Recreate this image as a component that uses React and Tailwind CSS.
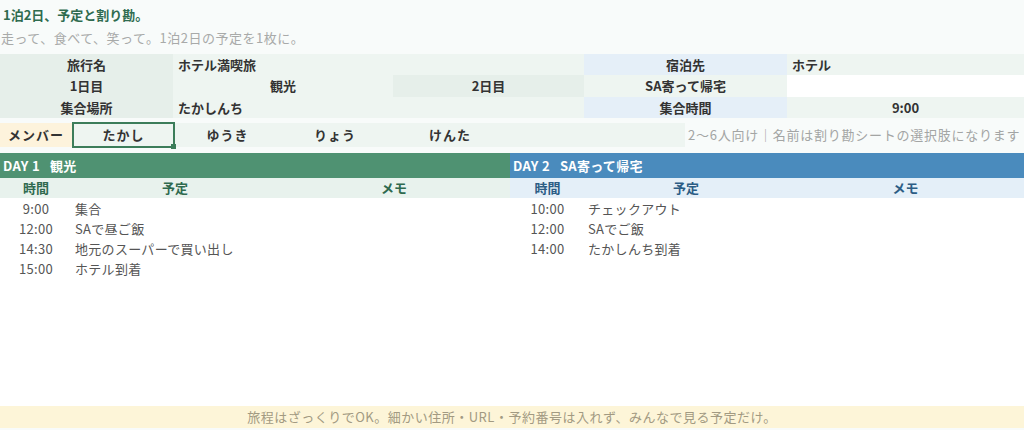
import React from 'react';

const font = { fontFamily: '"Noto Sans CJK JP", "Noto Sans", sans-serif' };

const day1 = [
    ['9:00', '集合'],
    ['12:00', 'SAで昼ご飯'],
    ['14:30', '地元のスーパーで買い出し'],
    ['15:00', 'ホテル到着'],
];

const day2 = [
    ['10:00', 'チェックアウト'],
    ['12:00', 'SAでご飯'],
    ['14:00', 'たかしんち到着'],
];

function Cell({ className = '', children }) {
    return <div className={`flex items-center px-[5px] ${className}`}>{children}</div>;
}

function DaySchedule({ day, title, rows, head, headBg, headText, widths }) {
    return (
        <div className="flex flex-col">
            <div className={`h-[25px] flex items-center pl-[3px] text-white font-bold text-[13px] tracking-[0.3px] ${head}`}>
                <span>{day}</span>
                <span className="ml-[10px]">{title}</span>
            </div>
            <div className={`h-[20px] grid ${widths} ${headBg} ${headText} font-bold text-[13px]`}>
                <div className="flex items-center justify-center">時間</div>
                <div className="flex items-center justify-center">予定</div>
                <div className="flex items-center justify-center">メモ</div>
            </div>
            <div className="bg-white h-[208px] pt-[1px]">
                {rows.map(([t, p]) => (
                    <div key={t + p} className={`h-[20px] grid ${widths} text-[13px] text-[#555] tracking-[0.3px]`}>
                        <div className="flex items-center justify-center">{t}</div>
                        <div className="flex items-center pl-[3px]">{p}</div>
                        <div></div>
                    </div>
                ))}
            </div>
        </div>
    );
}

export default function App() {
    return (
        <div className="w-[1024px] h-[430px] bg-[#f8fbfa] overflow-hidden flex flex-col pt-[4px]" style={font}>
            {/* Title */}
            <div className="h-[22px] flex items-center pl-[3px] text-[13px] font-bold text-[#2f6b4f]">1泊2日、予定と割り勘。</div>
            <div className="h-[23px] flex items-center pl-[1px] text-[13px] tracking-[0.5px] text-[#a8aaa9]">走って、食べて、笑って。1泊2日の予定を1枚に。</div>
            <div className="h-[5px]"></div>

            {/* Trip info */}
            <div className="grid grid-cols-[173px_220px_191px_203px_1fr] grid-rows-[21px_22px_21px] text-[13px] font-bold text-[#333]">
                <Cell className="bg-[#e6efea] justify-center">旅行名</Cell>
                <Cell className="bg-[#eef5f1]">ホテル満喫旅</Cell>
                <Cell className="bg-[#eef5f1]"></Cell>
                <Cell className="bg-[#e5eff8] justify-center">宿泊先</Cell>
                <Cell className="bg-[#eef5f1]">ホテル</Cell>

                <Cell className="bg-[#e6efea] justify-center">1日目</Cell>
                <Cell className="bg-[#eef5f1] justify-center">観光</Cell>
                <Cell className="bg-[#e6efea] justify-center">2日目</Cell>
                <Cell className="bg-[#eef5f1] justify-center">SA寄って帰宅</Cell>
                <Cell className="bg-white"></Cell>

                <Cell className="bg-[#e6efea] justify-center">集合場所</Cell>
                <Cell className="bg-[#eef5f1]">たかしんち</Cell>
                <Cell className="bg-[#eef5f1]"></Cell>
                <Cell className="bg-[#e5eff8] justify-center">集合時間</Cell>
                <Cell className="bg-[#eef5f1] justify-center">9:00</Cell>
            </div>

            {/* Members */}
            <div className="mt-[5px] h-[24px] grid grid-cols-[72px_103px_105px_110px_120px_175px_1fr] text-[13px] font-bold text-[#333]">
                <div className="bg-[#fdf3dc] flex items-center justify-center tracking-[1px]">メンバー</div>
                <div className="relative bg-[#eef5f1] border-2 border-[#3c7d5a] flex items-center justify-center -my-[1px] tracking-[1px]">
                    たかし
                    <span className="absolute -right-[3px] -bottom-[3px] w-[5px] h-[5px] bg-[#3c7d5a]"></span>
                </div>
                <div className="bg-[#eef5f1] flex items-center justify-center tracking-[1px]">ゆうき</div>
                <div className="bg-[#eef5f1] flex items-center justify-center tracking-[1px]">りょう</div>
                <div className="bg-[#eef5f1] flex items-center justify-center tracking-[1px]">けんた</div>
                <div className="bg-[#eef5f1]"></div>
                <div className="flex items-center pl-[3px] text-[13px] tracking-[0.75px] font-normal text-[#a3a5a4] whitespace-nowrap">2〜6人向け｜名前は割り勘シートの選択肢になります</div>
            </div>

            {/* Schedule */}
            <div className="mt-[6px] grid grid-cols-[510px_1fr]">
                <DaySchedule
                    day="DAY 1"
                    title="観光"
                    rows={day1}
                    head="bg-[#4f9272]"
                    headBg="bg-[#e8f2ed]"
                    headText="text-[#2f6a4f]"
                    widths="grid-cols-[72px_206px_1fr]"
                />
                <DaySchedule
                    day="DAY 2"
                    title="SA寄って帰宅"
                    rows={day2}
                    head="bg-[#4a8bbd]"
                    headBg="bg-[#e4eff8]"
                    headText="text-[#2c5d85]"
                    widths="grid-cols-[75px_202px_1fr]"
                />
            </div>

            {/* Footer */}
            <div className="h-[22px] bg-[#fdf5d8] flex items-center justify-center text-[13px] tracking-[0.5px] text-[#a29a82]">
                旅程はざっくりでOK。細かい住所・URL・予約番号は入れず、みんなで見る予定だけ。
            </div>
        </div>
    );
}
